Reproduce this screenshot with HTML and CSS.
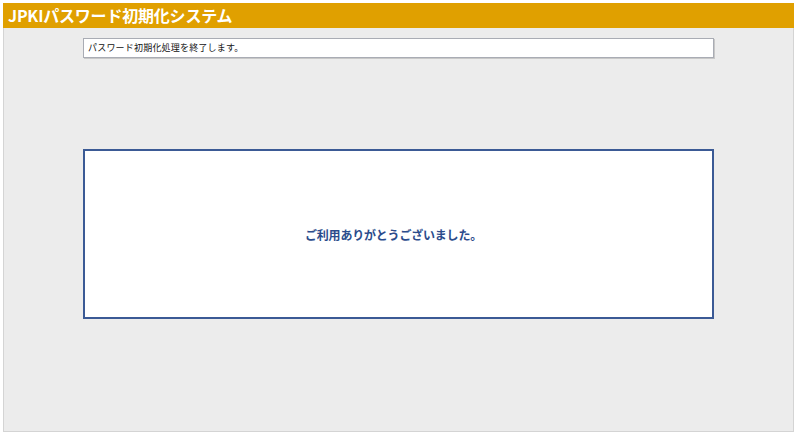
FILE: index.html
```html
<!DOCTYPE html>
<html lang="ja">
<head>
  <meta charset="UTF-8" />
  <meta name="viewport" content="width=device-width, initial-scale=1" />
  <title>JPKIパスワード初期化システム</title>
  <link rel="stylesheet" href="styles.css">
</head>
<body>
  <div class="frame">
    <h1 class="title">JPKIパスワード初期化システム</h1>
    <div class="panel">
      <div class="notice">パスワード初期化処理を終了します。</div>
      <div class="result">
        <p>ご利用ありがとうございました。</p>
      </div>
    </div>
  </div>
</body>
</html>
```

FILE: styles.css
```css
body { margin: 0; padding: 3px 4px 5px 3px; background: #fff; font-family: "Noto Sans CJK JP", "Noto Sans", sans-serif; color: #222; }
.frame { height: 429px; display: flex; flex-direction: column; }
.title { margin: 0; height: 25px; background: #e0a000; color: #fff; font-size: 16px; font-weight: bold; line-height: 25px; padding-left: 5px; letter-spacing: -0.2px; }
.panel { flex: 1; background: #ececec; border: 1px solid #d4d4d4; border-top: none; padding: 10px 79px 0 79px; }
.notice { height: 18px; background: #fff; border: 1px solid #a9acb4; box-shadow: 1px 1px 0 #c8c8c8; font-size: 9px; line-height: 18px; padding-left: 4px; color: #111; letter-spacing: 0.2px; }
.result { margin-top: 91px; height: 166px; background: #fff; border: 2px solid #3b5a95; display: flex; align-items: center; justify-content: center; }
.result p { margin: 0; color: #2b4c8c; font-size: 12px; font-weight: bold; padding-left: 0; padding-right: 10px; letter-spacing: -0.2px; }
```
